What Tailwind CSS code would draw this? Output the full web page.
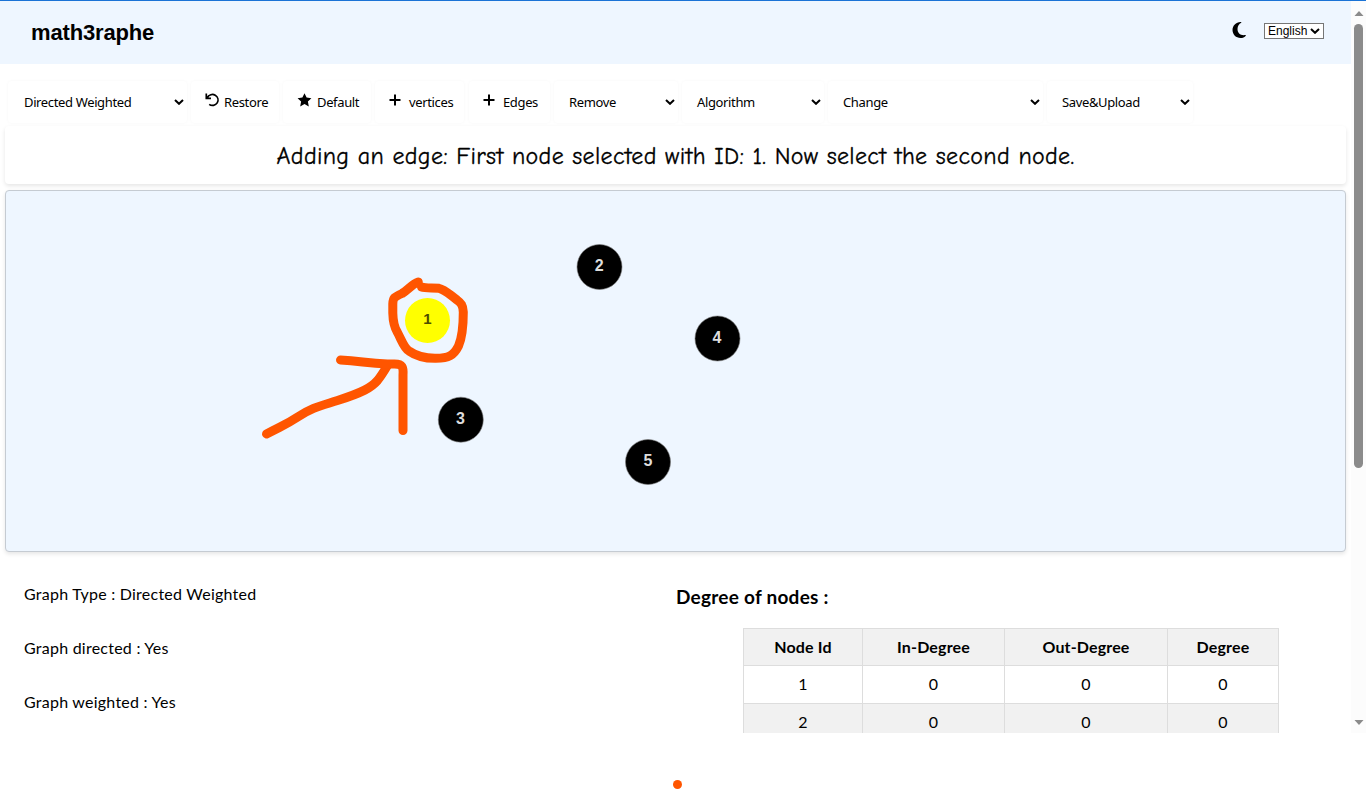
<!DOCTYPE html>
<html lang="en">
<head>
<meta charset="utf-8">
<title>math3raphe</title>
<script src="https://cdn.jsdelivr.net/npm/@tailwindcss/browser@4"></script>
</head>
<body class="bg-white text-black w-[1366px] h-[790px] overflow-hidden relative font-['Lato',sans-serif]">
<svg width="0" height="0" class="absolute"><defs>
<symbol id="chev" viewBox="0 0 10 6"><path d="M1 1l4 3.8L9 1" fill="none" stroke="#000" stroke-width="2"/></symbol>
</defs></svg>
<div class="flex h-[733px] border-t border-[#1a73d6] overflow-hidden">
  <div class="w-[1351px] h-full overflow-hidden flex flex-col">
    <header class="h-[63px] shrink-0 bg-[#eef6ff] flex items-center justify-between pl-[31px] pr-[27px] font-['Liberation_Sans',Arial,sans-serif]">
      <h1 class="text-[22px] font-bold leading-none whitespace-nowrap tracking-[-0.15px]">math3raphe</h1>
      <div class="flex items-center gap-[17px] pb-1">
        <svg class="-mt-px mr-px" width="14" height="16" viewBox="0 0 14 16"><path d="M8.500 0C4 .2.5 3.600.5 8s3.500 8 8 8c2.200 0 4.100-.9 5.300-2.300.2-.3 0-.7-.4-.6C8.500 14 5.500 10.800 5.500 7c0-2.800 1.500-5 3.700-6.200.4-.2.200-.8-.7-.8z"/></svg>
        <div class="w-[60px] h-4 border border-[#767676] bg-white flex items-center justify-between pl-[3px] pr-[3px] text-[12px] leading-none"><span>English</span><svg width="10" height="6"><use href="#chev"/></svg></div>
      </div>
    </header>
    <nav class="mt-[17px] ml-2 h-[42px] shrink-0 flex font-['Noto_Sans',sans-serif] text-[13px] tracking-[-0.36px] whitespace-nowrap [&_span]:pt-0.5">
      <div class="w-[179px] mr-1 rounded shadow-[0_0_3px_rgba(0,0,0,0.04)] flex items-center justify-between pl-4 pr-[3px]"><span>Directed Weighted</span><svg width="10" height="6"><use href="#chev"/></svg></div>
      <div class="w-[88px] mr-1 rounded shadow-[0_0_3px_rgba(0,0,0,0.04)] flex items-center pl-[14px]"><svg class="mr-1 mb-1" width="15" height="14" viewBox="0 0 15 14"><path d="M1.300.5v4.800H6M1.800 5C4 1.600 7.500.6 10.200 2.200c2.800 1.700 3.600 5 2 7.700-1.600 2.600-5.400 3.400-8 1.400" fill="none" stroke="#000" stroke-width="1.700"/></svg><span>Restore</span></div>
      <div class="w-[88px] mr-1 rounded shadow-[0_0_3px_rgba(0,0,0,0.04)] flex items-center pl-[14px]"><svg class="mr-[5px] mb-1" width="15" height="14" viewBox="0 0 15 14"><path d="M7.500.2l2.100 4.300 4.800.7-3.500 3.300.9 4.900-4.300-2.300-4.300 2.300.9-4.900L.6 5.200l4.800-.7z"/></svg><span>Default</span></div>
      <div class="w-[89px] mr-[5px] rounded shadow-[0_0_3px_rgba(0,0,0,0.04)] flex items-center pl-[14px]"><svg class="mr-2 mb-1" width="12" height="12"><path d="M6 .5v11M.5 6h11" stroke="#000" stroke-width="2"/></svg><span>vertices</span></div>
      <div class="w-[81px] mr-1 rounded shadow-[0_0_3px_rgba(0,0,0,0.04)] flex items-center pl-[14px]"><svg class="mr-2 mb-1" width="12" height="12"><path d="M6 .5v11M.5 6h11" stroke="#000" stroke-width="2"/></svg><span>Edges</span></div>
      <div class="w-[124px] mr-1 rounded shadow-[0_0_3px_rgba(0,0,0,0.04)] flex items-center justify-between pl-[15px] pr-[3px]"><span>Remove</span><svg width="10" height="6"><use href="#chev"/></svg></div>
      <div class="w-[142px] mr-1 rounded shadow-[0_0_3px_rgba(0,0,0,0.04)] flex items-center justify-between pl-[15px] pr-[3px]"><span>Algorithm</span><svg width="10" height="6"><use href="#chev"/></svg></div>
      <div class="w-[215px] mr-1 rounded shadow-[0_0_3px_rgba(0,0,0,0.04)] flex items-center justify-between pl-[15px] pr-[3px]"><span>Change</span><svg width="10" height="6"><use href="#chev"/></svg></div>
      <div class="w-[146px] rounded shadow-[0_0_3px_rgba(0,0,0,0.04)] flex items-center justify-between pl-[15px] pr-[3px]"><span>Save&amp;Upload</span><svg width="10" height="6"><use href="#chev"/></svg></div>
    </nav>
    <div class="mt-[3px] mx-[5px] h-[58px] shrink-0 rounded shadow-[0_2px_4px_rgba(0,0,0,0.1)] flex items-center justify-center font-['Comic_Sans_MS','Comic_Neue','Open_Sans',sans-serif] text-[24px] leading-none whitespace-nowrap tracking-[0.335px] [-webkit-text-stroke:0.3px_#000]"><span class="pt-px">Adding an edge: First node selected with ID: 1. Now select the second node.</span></div>
    <main class="mt-1.5 mx-[5px] h-[362px] shrink-0 rounded border border-[#c5cbd2] bg-[#eef6ff] shadow-[0_2px_4px_rgba(0,0,0,0.1)]">
      <svg class="block" width="1339" height="360" viewBox="6 191 1339 360" font-family="Liberation Sans, Arial, sans-serif" font-size="16" font-weight="bold" text-anchor="middle">
        <g stroke="#777" stroke-width=".6"><circle cx="599.500" cy="267" r="22.500"/><circle cx="717.500" cy="338.500" r="22.500"/><circle cx="460.800" cy="419.700" r="22.500"/><circle cx="648" cy="462" r="22.500"/></g>
        <circle cx="427.500" cy="320.500" r="22.500" fill="#ff0"/>
        <g fill="#ddd"><text x="599.300" y="271">2</text><text x="717" y="342.500">4</text><text x="460.500" y="424">3</text><text x="648" y="466">5</text></g>
        <text x="427.500" y="324" font-size="15" fill="#4d4d00">1</text>
        <g fill="none" stroke="#f50" stroke-width="9" stroke-linecap="round" stroke-linejoin="round">
          <path d="M418.300 282C412 284 408 290 402 293.500C394 297 393 298 392.800 304V313C393 322 394 327 397.500 332.500C402 341 404 348 409 351C416 356 425 358.300 435 358.300C449 358.500 454 355 458.500 346C462 338 463.300 325 463.300 312C463 305 461 303 457 300C450 295 445 289.500 439 288.300C433 287.500 426 288.500 421.500 287"/>
          <path d="M266.500 434c17-9 19-9 32-17.500 14-9 20-10 39-16 25-8 34-13 40-20 4-5 7-10 10-15"/>
          <path d="M340.500 360c21 1 26 3.500 47 4h7c8 0 9 3 8.500 11V430.500"/>
        </g>
      </svg>
    </main>
    <section class="flex text-[16px] whitespace-nowrap">
      <div class="w-[652px] pl-6 pt-[30px] flex flex-col gap-[30px] leading-6 tracking-[0.24px]">
        <p>Graph Type : Directed Weighted</p><p>Graph directed : Yes</p><p>Graph weighted : Yes</p>
      </div>
      <div class="pl-6">
        <h2 class="mt-[33px] mb-[19px] text-[19px] leading-6 font-bold tracking-[0.25px]">Degree of nodes :</h2>
        <table class="ml-[67px] w-[536px] table-fixed border-collapse text-center leading-[18px] [&_th]:h-[37px] [&_td]:h-[38px] [&_td]:pb-0.5 [&_th]:tracking-[0.15px] [&_th]:border [&_td]:border [&_th]:border-[#ddd] [&_td]:border-[#ddd]">
          <colgroup><col class="w-[119px]"><col class="w-[142px]"><col class="w-[163px]"><col class="w-[111px]"></colgroup>
          <tr class="bg-[#f1f1f1]"><th>Node Id</th><th>In-Degree</th><th>Out-Degree</th><th>Degree</th></tr>
          <tr><td>1</td><td>0</td><td>0</td><td>0</td></tr>
          <tr class="bg-[#f1f1f1]"><td>2</td><td>0</td><td>0</td><td>0</td></tr>
        </table>
      </div>
    </section>
  </div>
  <div class="w-[15px] h-full bg-[#fcfcfc] flex flex-col items-center pt-[10px] pb-2">
    <svg width="10" height="5"><path d="M5 0l4.500 5h-9z" fill="#8b8b8b"/></svg>
    <div class="mt-2 w-[9px] h-[444px] rounded-full bg-[#8b8b8b]"></div>
    <svg class="mt-auto" width="10" height="5"><path d="M.5 0h9L5 5z" fill="#8b8b8b"/></svg>
  </div>
</div>
<div class="mt-[47px] ml-[673px] w-[9px] h-[9px] rounded-full bg-[#f50]"></div>
</body>
</html>
